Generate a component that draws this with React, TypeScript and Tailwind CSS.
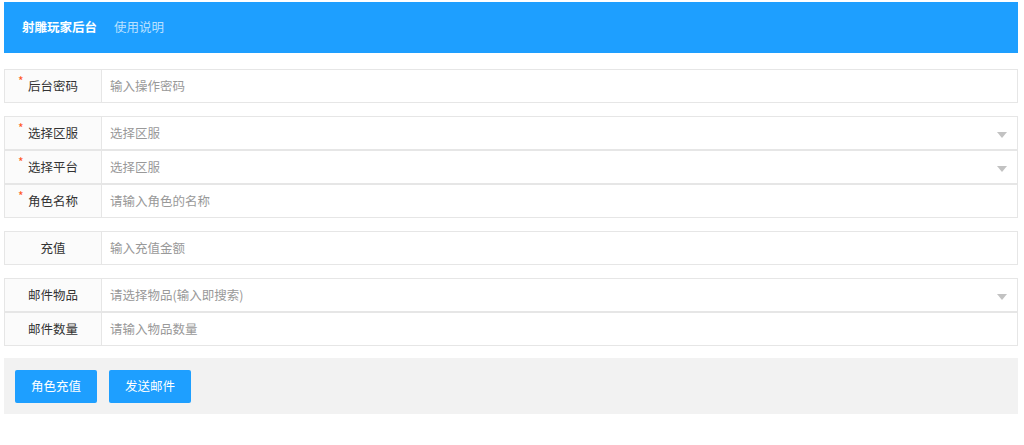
import React from 'react';

const font = { fontFamily: '"Noto Sans CJK SC", "Noto Sans", sans-serif' };

type RowProps = {
    label: string;
    placeholder: string;
    required?: boolean;
    select?: boolean;
};

function Row({ label, placeholder, required, select }: RowProps) {
    return (
        <div className="flex h-[34px] border border-[#e6e6e6] bg-white">
            {/* label cell */}
            <div className="relative flex w-[97px] shrink-0 items-center justify-center border-r border-[#e6e6e6] bg-[#fbfbfb] text-[12.5px] text-[#333]">
                {required && (
                    <span className="absolute left-[13px] top-[5px] text-[12px] leading-none text-[#ff5722]">*</span>
                )}
                {label}
            </div>
            <div className="relative flex flex-1 items-center pl-[8px] text-[12.5px] text-[#999]">
                {placeholder}
                {select && (
                    <span className="absolute right-[10px] top-[15px] h-0 w-0 border-x-[5px] border-t-[6px] border-x-transparent border-t-[#c2c2c2]" />
                )}
            </div>
        </div>
    );
}

export default function App() {
    return (
        <div style={font} className="min-h-[445px] w-[1024px] bg-white pl-[4px] pt-[2px]">
            <div className="w-[1014px]">
                {/* header */}
                <div className="flex h-[51px] items-center bg-[#1e9fff] pl-[18px] text-[12.5px]">
                    <span className="font-bold text-white">射雕玩家后台</span>
                    <span className="ml-[17px] text-white/70">使用说明</span>
                </div>

                <div className="mt-[16px]">
                    <Row label="后台密码" placeholder="输入操作密码" required />
                </div>

                <div className="mt-[13px]">
                    <Row label="选择区服" placeholder="选择区服" required select />
                    <Row label="选择平台" placeholder="选择区服" required select />
                    <Row label="角色名称" placeholder="请输入角色的名称" required />
                </div>

                <div className="mt-[13px]">
                    <Row label="充值" placeholder="输入充值金额" />
                </div>

                <div className="mt-[13px]">
                    <Row label="邮件物品" placeholder="请选择物品(输入即搜索)" select />
                    <Row label="邮件数量" placeholder="请输入物品数量" />
                </div>

                {/* buttons */}
                <div className="mt-[12px] flex h-[56px] gap-[12px] bg-[#f2f2f2] pl-[11px] pt-[12px]">
                    <button className="h-[33px] w-[82px] rounded-[2px] bg-[#1e9fff] text-[12.5px] text-white">角色充值</button>
                    <button className="h-[33px] w-[82px] rounded-[2px] bg-[#1e9fff] text-[12.5px] text-white">发送邮件</button>
                </div>
            </div>
        </div>
    );
}
